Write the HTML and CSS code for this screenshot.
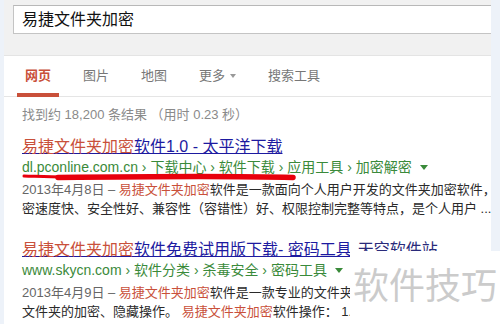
FILE: index.html
```html
<!DOCTYPE html>
<html lang="zh-CN">
<head>
<meta charset="utf-8">
<title>易捷文件夹加密</title>
<link rel="stylesheet" href="styles.css">
</head>
<body>
<div class="page">
  <div class="main">
    <div class="top">
      <div class="search">易捷文件夹加密</div>
    </div>
    <div class="content">
      <nav class="tabs">
        <span class="tab active">网页</span>
        <span class="tab">图片</span>
        <span class="tab">地图</span>
        <span class="tab">更多<i class="caret gray"></i></span>
        <span class="tab">搜索工具</span>
      </nav>
      <div class="stats">找到约 18,200 条结果 （用时 0.23 秒）</div>

      <div class="result first">
        <div class="title"><a><em>易捷文件夹加密</em>软件1.0 - 太平洋下载</a></div>
        <div class="url">dl.pconline.com.cn › 下载中心 › 软件下载 › 应用工具 › 加密解密<i class="caret green"></i></div>
        <div class="snippet"><span class="date">2013年4月8日 – </span><em>易捷文件夹加密</em>软件是一款面向个人用户开发的文件夹加密软件，</div>
        <div class="snippet">密速度快、安全性好、兼容性（容错性）好、权限控制完整等特点，是个人用户 ...</div>
        <svg class="mark" width="290" height="14" viewBox="0 0 290 14">
          <path d="M4 5 C 20 5.5 32 6 42 6" stroke="#e8000c" stroke-width="3" fill="none" stroke-linecap="round"/>
          <path d="M38 6.5 C 120 5.5 220 5 273 6.5" stroke="#e8000c" stroke-width="5.5" fill="none" stroke-linecap="round"/>
        </svg>
      </div>

      <div class="result second">
        <div class="title"><a><em>易捷文件夹加密</em>软件免费试用版下载- 密码工具<span class="site">天空软件站</span></a></div>
        <div class="url">www.skycn.com › 软件分类 › 杀毒安全 › 密码工具<i class="caret green"></i></div>
        <div class="snippet"><span class="date">2013年4月9日 – </span><em>易捷文件夹加密</em>软件是一款专业的文件夹</div>
        <div class="snippet">文件夹的加密、隐藏操作。 <em>易捷文件夹加密</em>软件操作： 1.</div>
      </div>
    </div>
  </div>
  <div class="watermark">软件技巧</div>
</div>
</body>
</html>
```

FILE: styles.css
```css
* { box-sizing: border-box; }

html, body {
  margin: 0;
  padding: 0;
}

body {
  width: 500px;
  height: 324px;
  overflow: hidden;
  background: #edf2f9;
  font-family: "Liberation Sans", Arial, "Noto Sans CJK SC", sans-serif;
}

.page {
  position: relative;
  width: 500px;
  height: 324px;
  padding-left: 4px;
}

.main {
  width: 487px;
  height: 324px;
  display: flex;
  flex-direction: column;
}

.top {
  height: 56px;
  background: #f1f1f1;
  border-bottom: 1px solid #e4e4e4;
  padding: 5px 0 0 9px;
}

.search {
  height: 29px;
  background: #fff;
  border: 1px solid #c4c4c4;
  border-top-color: #b8b8b8;
  border-right: none;
  padding-left: 8px;
  font-size: 16px;
  line-height: 27px;
  color: #111;
  white-space: nowrap;
}

.content {
  flex: 1;
  background: #fff;
}

.tabs {
  display: flex;
  gap: 16px;
  height: 41px;
  padding-left: 13px;
  border-bottom: 1px solid #e5e5e5;
}

.tab {
  height: 41px;
  margin-bottom: -1px;
  padding: 12px 8px 0;
  font-size: 13px;
  line-height: 16px;
  color: #777;
  white-space: nowrap;
}

.tab.active {
  color: #c9503a;
  font-weight: bold;
  border-bottom: 4px solid #c9503a;
}

.caret {
  display: inline-block;
  width: 0;
  height: 0;
  border-left: 3.5px solid transparent;
  border-right: 3.5px solid transparent;
  border-top: 4px solid #999;
  vertical-align: middle;
  margin-left: 5px;
  margin-top: -2px;
}

.caret.green {
  border-top-color: #3a8a3a;
  margin-left: 8px;
  border-left-width: 4px;
  border-right-width: 4px;
  border-top-width: 5px;
}

.stats {
  margin-top: 8px;
  padding-left: 18px;
  font-size: 13px;
  line-height: 19px;
  color: #8a8a8a;
  white-space: nowrap;
}

.result {
  position: relative;
  padding-left: 18px;
}

.result.first { margin-top: 12px; }
.result.second { margin-top: 21px; }

.title {
  font-size: 16px;
  line-height: 22px;
  white-space: nowrap;
}

.title a {
  color: #1d1aa0;
  text-decoration: underline;
}

.title em {
  font-style: normal;
  color: #c9503a;
}

.site {
  margin-left: 6px;
  color: #2a2a7a;
}

.url {
  font-size: 14px;
  line-height: 18px;
  color: #3a8a3a;
  white-space: nowrap;
}

.snippet {
  font-size: 13px;
  line-height: 19px;
  color: #2a2a2a;
  white-space: nowrap;
}

.url + .snippet { margin-top: 4px; }

.snippet em {
  font-style: normal;
  color: #c9503a;
}

.date { color: #666; }

.mark {
  position: absolute;
  left: 16px;
  top: 35px;
}

.watermark {
  position: absolute;
  left: 350px;
  top: 251px;
  right: 0;
  bottom: 0;
  background: #fff;
  padding: 12px 0 0 3px;
  font-family: "Noto Sans CJK SC", sans-serif;
  font-size: 36px;
  line-height: 40px;
  color: #cbcbcb;
  white-space: nowrap;
}
```
